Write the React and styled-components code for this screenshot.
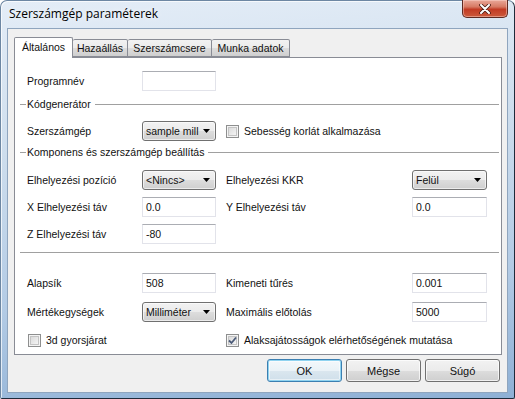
import React from 'react'
import styled, { createGlobalStyle, css } from 'styled-components'

const GlobalStyle = createGlobalStyle`
  html, body { margin: 0; padding: 0; background: #fff; }
  body { font-family: "Liberation Sans", Arial, sans-serif; font-size: 10.5px; color: #111; }
`

const Window = styled.div`
  width: 515px;
  height: 399px;
  box-sizing: border-box;
  display: flex;
  flex-direction: column;
  padding: 0 6px 5px 6px;
  border: 1px solid #6d87a3;
  border-right-color: #1e2a3a;
  border-bottom-color: #1e2a3a;
  border-radius: 7px 7px 2px 2px;
  background: linear-gradient(175deg, #e4edf7 0%, #cddded 35%, #b3cbe5 70%, #8eb0d5 100%);
  box-shadow: inset 1px 1px 0 rgba(255, 255, 255, 0.7);
`

const TitleBar = styled.div`
  height: 27px;
  display: flex;
  justify-content: space-between;
  align-items: flex-start;
`

const Title = styled.div`
  font-family: "Open Sans", "Liberation Sans", sans-serif;
  font-size: 12px;
  color: #000;
  padding: 4px 0 0 2px;
  text-shadow: 0 0 6px rgba(255, 255, 255, 0.9);
`

const CloseButton = styled.div`
  width: 46px;
  height: 18px;
  margin-top: -1px;
  box-sizing: border-box;
  display: flex;
  align-items: center;
  justify-content: center;
  border: 1px solid #5e2a22;
  border-top: none;
  border-radius: 0 0 5px 5px;
  background: linear-gradient(#e9a899 0%, #d77a64 40%, #c23b24 55%, #cc5a3c 100%);
  box-shadow: inset 0 0 0 1px rgba(255, 220, 210, 0.45);
`

const Client = styled.div`
  flex: 1;
  display: flex;
  flex-direction: column;
  background: #f0f0f0;
  border: 1px solid #8fa5be;
  padding: 7px 5px 0 6px;
`

const TabStrip = styled.div`
  display: flex;
  align-items: flex-end;
  height: 21px;
  position: relative;
  z-index: 1;
`

const Tab = styled.div`
  box-sizing: border-box;
  width: ${p => p.$w}px;
  height: 18px;
  display: flex;
  align-items: center;
  justify-content: center;
  border: 1px solid #898c95;
  border-left: none;
  border-radius: 2px 2px 0 0;
  background: linear-gradient(#f2f2f2 0%, #ebebeb 50%, #dddddd 50%, #cfcfcf 100%);
  ${p =>
    p.$active &&
    css`
      height: 21px;
      margin-bottom: -1px;
      border-left: 1px solid #898c95;
      border-bottom: none;
      background: #fff;
      padding-bottom: 2px;
    `}
`

const Panel = styled.div`
  height: 298px;
  box-sizing: border-box;
  border: 1px solid #898c95;
  background: #fff;
  display: flex;
  flex-direction: column;
`

const Row = styled.div`
  display: grid;
  grid-template-columns: 115px 74px 10px 186px 75px;
  align-items: center;
  height: ${p => p.$h || 20}px;
  margin-top: ${p => p.$top}px;
  padding-left: 12px;
`

const Label = styled.div`
  white-space: nowrap;
`

const TextBox = styled.div`
  box-sizing: border-box;
  height: 20px;
  display: flex;
  align-items: center;
  padding-left: 3px;
  background: #fff;
  border: 1px solid #e2e3ea;
  border-top-color: #abadb3;
`

const Combo = styled.div`
  box-sizing: border-box;
  height: 20px;
  display: flex;
  align-items: center;
  justify-content: space-between;
  padding: 0 5px 0 3px;
  border: 1px solid #707070;
  border-radius: 3px;
  background: linear-gradient(#f2f2f2 0%, #ebebeb 50%, #dddddd 50%, #cfcfcf 100%);
  box-shadow: inset 0 0 0 1px rgba(255, 255, 255, 0.6);
`

const Arrow = () => (
  <svg width="7" height="4" viewBox="0 0 7 4">
    <path d="M0 0 H7 L3.5 4 Z" fill="#000" />
  </svg>
)

const CheckWrap = styled.div`
  display: flex;
  align-items: center;
  gap: 5px;
  grid-column: ${p => p.$col || 'auto'};
  margin-left: ${p => p.$ml || 0}px;
  white-space: nowrap;
`

const Box = styled.div`
  width: 13px;
  height: 13px;
  box-sizing: border-box;
  border: 1px solid #8e8f8f;
  background: linear-gradient(135deg, #d4d4d4, #fbfbfb);
  box-shadow: inset 0 0 0 1px #f4f4f4, inset 0 0 0 2px #c4c4c4;
  display: flex;
  align-items: center;
  justify-content: center;
`

const CheckBox = ({ checked, children, col, ml }) => (
  <CheckWrap $col={col} $ml={ml}>
    <Box>
      {checked && (
        <svg width="9" height="9" viewBox="0 0 9 9">
          <path d="M1 4.5 L3.5 7 L8 1.5" fill="none" stroke="#4a5a78" strokeWidth="1.8" />
        </svg>
      )}
    </Box>
    <span>{children}</span>
  </CheckWrap>
)

const GroupHead = styled.div`
  display: flex;
  align-items: center;
  height: 14px;
  margin-top: ${p => p.$top}px;
  padding: 0 2px 0 5px;
`

const Stub = styled.div`
  width: 6px;
  border-top: 1px solid #a0a0a0;
  margin-right: 1px;
`

const Rule = styled.div`
  flex: 1;
  border-top: 1px solid #a0a0a0;
  margin-left: ${p => p.$ml || 0}px;
`

const SepLine = styled.div`
  margin: ${p => p.$top}px 2px 0 5px;
  border-top: 1px solid #a0a0a0;
`

const ButtonRow = styled.div`
  display: flex;
  justify-content: flex-end;
  gap: 4px;
  padding: 4px 2px 0 0;
`

const Button = styled.div`
  width: 75px;
  height: 23px;
  box-sizing: border-box;
  display: flex;
  align-items: center;
  justify-content: center;
  font-size: 11px;
  border: 1px solid #707070;
  border-radius: 3px;
  background: linear-gradient(#f2f2f2 0%, #ebebeb 50%, #dddddd 50%, #cfcfcf 100%);
  box-shadow: inset 0 0 0 1px rgba(255, 255, 255, 0.7);
  ${p =>
    p.$default &&
    css`
      border-color: #3c7fb1;
      box-shadow: inset 0 0 0 1px #8fd3f0, inset 0 0 0 2px rgba(255, 255, 255, 0.5);
      background: linear-gradient(#f3f8fb 0%, #eaf2f7 50%, #dbe7ef 50%, #cfdfea 100%);
    `}
`

export default function App() {
  return (
    <>
      <GlobalStyle />
      <Window>
        <TitleBar>
          <Title>Szerszámgép paraméterek</Title>
          <CloseButton>
            <svg width="12" height="10" viewBox="0 0 12 10">
              <path d="M2 1 L10 9 M10 1 L2 9" stroke="#4a1c14" strokeWidth="3.6" strokeLinecap="round" />
              <path d="M2 1 L10 9 M10 1 L2 9" stroke="#fff" strokeWidth="2" strokeLinecap="round" />
            </svg>
          </CloseButton>
        </TitleBar>
        <Client>
          <TabStrip>
            <Tab $active $w={59}>Általános</Tab>
            <Tab $w={55}>Hazaállás</Tab>
            <Tab $w={84}>Szerszámcsere</Tab>
            <Tab $w={78}>Munka adatok</Tab>
          </TabStrip>
          <Panel>
            <Row $top={13}>
              <Label>Programnév</Label>
              <TextBox />
            </Row>
            <GroupHead $top={6}>
              <Stub />
              <span>Kódgenerátor</span>
              <Rule $ml={4} />
            </GroupHead>
            <Row $top={10}>
              <Label>Szerszámgép</Label>
              <Combo>sample mill<Arrow /></Combo>
              <span />
              <CheckBox col="4 / 6">Sebesség korlát alkalmazása</CheckBox>
            </Row>
            <GroupHead $top={4}>
              <Stub />
              <span>Komponens és szerszámgép beállítás</span>
              <Rule $ml={4} />
            </GroupHead>
            <Row $top={11}>
              <Label>Elhelyezési pozíció</Label>
              <Combo>&lt;Nincs&gt;<Arrow /></Combo>
              <span />
              <Label>Elhelyezési KKR</Label>
              <Combo>Felül<Arrow /></Combo>
            </Row>
            <Row $top={7}>
              <Label>X Elhelyezési táv</Label>
              <TextBox>0.0</TextBox>
              <span />
              <Label>Y Elhelyezési táv</Label>
              <TextBox>0.0</TextBox>
            </Row>
            <Row $top={7}>
              <Label>Z Elhelyezési táv</Label>
              <TextBox>-80</TextBox>
            </Row>
            <SepLine $top={8} />
            <Row $top={20}>
              <Label>Alapsík</Label>
              <TextBox>508</TextBox>
              <span />
              <Label>Kimeneti tűrés</Label>
              <TextBox>0.001</TextBox>
            </Row>
            <Row $top={9}>
              <Label>Mértékegységek</Label>
              <Combo>Milliméter<Arrow /></Combo>
              <span />
              <Label>Maximális előtolás</Label>
              <TextBox>5000</TextBox>
            </Row>
            <Row $top={10} $h={16}>
              <CheckBox col="1 / 3" ml={1}>3d gyorsjárat</CheckBox>
              <CheckBox col="4 / 6" checked>Alaksajátosságok elérhetőségének mutatása</CheckBox>
            </Row>
          </Panel>
          <ButtonRow>
            <Button $default>OK</Button>
            <Button>Mégse</Button>
            <Button>Súgó</Button>
          </ButtonRow>
        </Client>
      </Window>
    </>
  )
}
